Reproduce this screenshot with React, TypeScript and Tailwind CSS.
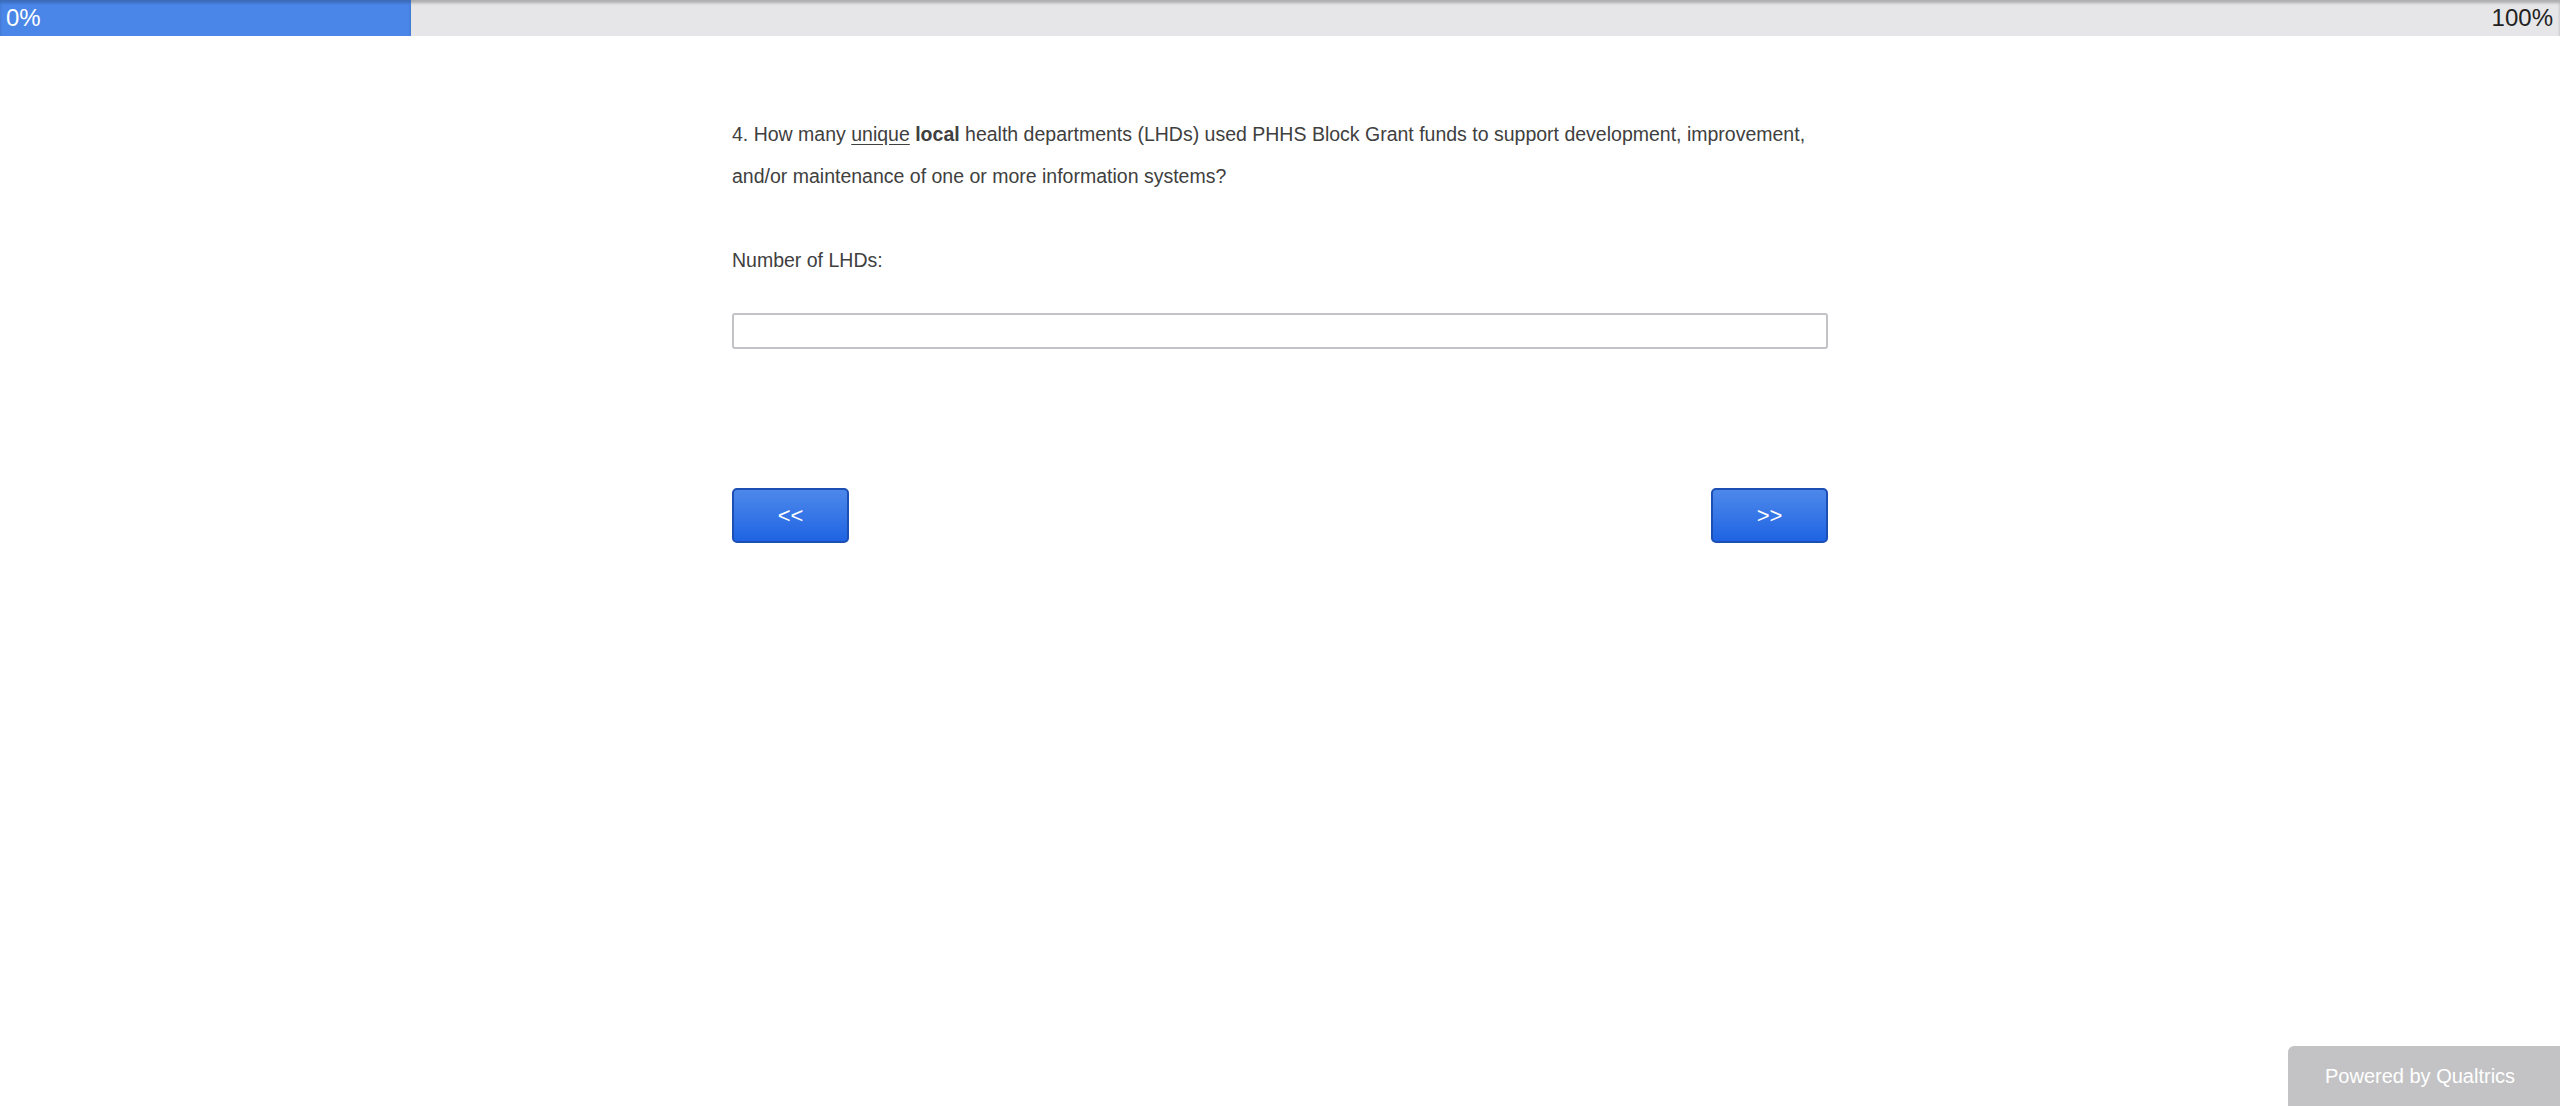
export default function App() {
  return (
    <div className="relative min-h-[1106px] w-full bg-white" style={{ fontFamily: '"Liberation Sans", Arial, sans-serif' }}>
      {/* Progress bar */}
      <div className="relative flex h-[36px] w-full items-center bg-[#e6e6e8] shadow-[inset_0_3px_3px_rgba(0,0,0,0.25)]">
        <div className="flex h-full w-[411px] items-center bg-[#4a86e8] pl-[6px] text-[24px] text-white shadow-[inset_0_3px_3px_rgba(0,0,0,0.2)]">
          0%
        </div>
        <div className="ml-auto pr-[7px] text-[24px] text-[#222]">100%</div>
      </div>

      {/* Question */}
      <div className="mx-auto w-[1096px] pt-[77px] text-[19.5px] text-[#404040]">
        <p className="leading-[42px]">
          4. How many <span className="underline underline-offset-[3px]">unique</span> <b>local</b> health departments (LHDs) used PHHS Block Grant funds to support development, improvement, and/or maintenance of one or more information systems?
        </p>
        <p className="mt-[42px] leading-[42px]">Number of LHDs:</p>
        <input
          type="text"
          className="mt-[32px] block h-[36px] w-full rounded-[3px] border-2 border-[#c3c3c7] bg-white outline-none"
        />

        <div className="mt-[139px] flex justify-between">
          <button className="h-[55px] w-[117px] rounded-[5px] border-2 border-[#1b4fb4] bg-gradient-to-b from-[#4d88ea] to-[#1e63e3] text-[22px] text-white">
            &lt;&lt;
          </button>
          <button className="h-[55px] w-[117px] rounded-[5px] border-2 border-[#1b4fb4] bg-gradient-to-b from-[#4d88ea] to-[#1e63e3] text-[22px] text-white">
            &gt;&gt;
          </button>
        </div>
      </div>

      {/* Footer badge */}
      <div className="absolute bottom-0 right-0 flex h-[60px] w-[272px] items-center rounded-tl-[6px] bg-[#c3c3c5] pl-[37px] text-[20px] text-white">
        Powered by Qualtrics
      </div>
    </div>
  );
}
